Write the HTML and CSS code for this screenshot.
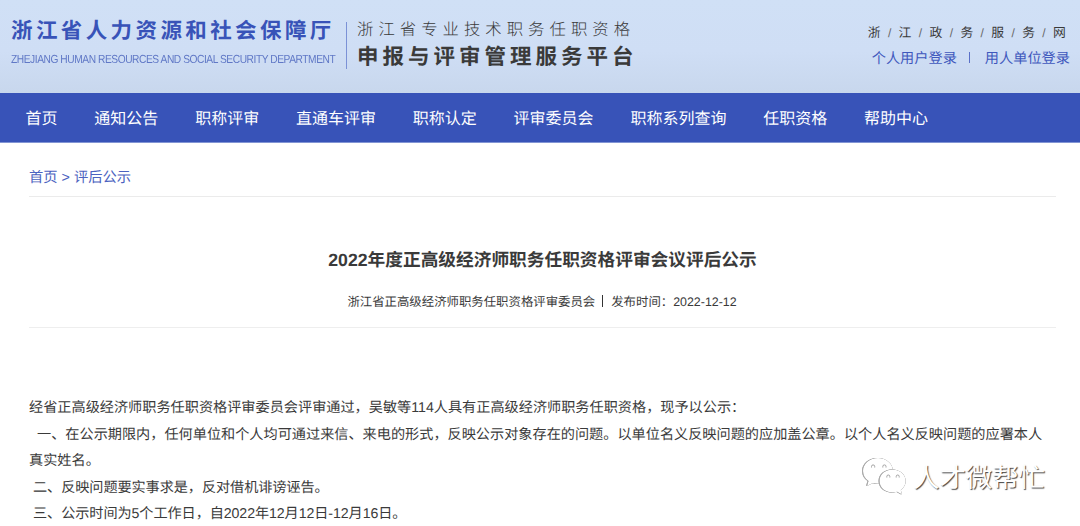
FILE: index.html
```html
<!DOCTYPE html>
<html lang="zh-CN">
<head>
    <meta charset="UTF-8">
    <title>2022年度正高级经济师职务任职资格评审会议评后公示</title>
    <link rel="stylesheet" href="styles.css">
</head>
<body>

<!-- 页头 -->
<header class="header">
    <div class="org">
        <div class="org-name">浙江省人力资源和社会保障厅</div>
        <div class="org-en">ZHEJIANG HUMAN RESOURCES AND SOCIAL SECURITY DEPARTMENT</div>
    </div>
    <div class="platform">
        <div class="platform-sub">浙江省专业技术职务任职资格</div>
        <div class="platform-name">申报与评审管理服务平台</div>
    </div>
    <div class="header-right">
        <a class="gov-link"><span>浙</span><i>/</i><span>江</span><i>/</i><span>政</span><i>/</i><span>务</span><i>/</i><span>服</span><i>/</i><span>务</span><i>/</i><span>网</span></a>
        <div class="login">
            <a>个人用户登录</a>
            <span class="login-line"></span>
            <a>用人单位登录</a>
        </div>
    </div>
</header>

<!-- 导航 -->
<nav class="nav">
    <a>首页</a>
    <a>通知公告</a>
    <a>职称评审</a>
    <a>直通车评审</a>
    <a>职称认定</a>
    <a>评审委员会</a>
    <a>职称系列查询</a>
    <a>任职资格</a>
    <a>帮助中心</a>
</nav>

<!-- 正文 -->
<main class="main">
    <div class="breadcrumb"><a>首页</a><span>&gt;</span><a>评后公示</a></div>
    <h1 class="title">2022年度正高级经济师职务任职资格评审会议评后公示</h1>
    <div class="meta">
        <span>浙江省正高级经济师职务任职资格评审委员会</span>
        <span class="meta-line"></span>
        <span>发布时间：2022-12-12</span>
    </div>
    <div class="content">
        <p>经省正高级经济师职务任职资格评审委员会评审通过，吴敏等114人具有正高级经济师职务任职资格，现予以公示：</p>
        <p class="first">一、在公示期限内，任何单位和个人均可通过来信、来电的形式，反映公示对象存在的问题。以单位名义反映问题的应加盖公章。以个人名义反映问题的应署本人</p>
        <p>真实姓名。</p>
        <p class="item">二、反映问题要实事求是，反对借机诽谤诬告。</p>
        <p class="item">三、公示时间为5个工作日，自2022年12月12日-12月16日。</p>
    </div>
</main>

<!-- 水印 -->
<div class="watermark">
    <svg class="wechat" width="46" height="40" viewBox="0 0 46 40">
        <g class="bubble">
            <path d="M16 1C7.500 1 1 6.800 1 14c0 4.200 2 7.600 5.500 10L5 29l6-3c1.600.5 3.300.8 5 .8C24.500 26.800 31 21 31 14S24.500 1 16 1z"/>
        </g>
        <g class="bubble">
            <path d="M30.500 12.500C23 12.500 17.500 17.600 17.500 24s5.500 11.500 13 11.500c1.600 0 3.200-.3 4.600-.7L40 37.500l-1.200-4.500c3-2.200 4.900-5.300 4.900-9 0-6.400-5.700-11.500-13.200-11.500z"/>
        </g>
        <g class="eyes">
            <path d="M9.500 10.500v-1a1.600 1.600 0 0 1 3.200 0v1M20.800 10.500v-1a1.600 1.600 0 0 1 3.200 0v1M24.800 20.500v-1a1.500 1.500 0 0 1 3 0v1M34.200 20.500v-1a1.500 1.500 0 0 1 3 0v1"/>
        </g>
    </svg>
    <span class="watermark-text">人才微帮忙</span>
</div>

</body>
</html>
```

FILE: styles.css
```css
* {
    box-sizing: border-box;
}

body {
    margin: 0;
    height: 526px;
    overflow: hidden;
    background: #fff;
    color: #3a3a3a;
    font-family: "Liberation Sans", "Noto Sans CJK SC", sans-serif;
    text-rendering: geometricPrecision;
}

/* 页头 */
.header {
    display: flex;
    height: 93px;
    padding-left: 11px;
    padding-right: 10px;
    background: linear-gradient(#d0e0f6 0%, #cfdef5 55%, #c8d7ed 100%);
    white-space: nowrap;
}

.org {
    width: 335px;
    padding-top: 16px;
    color: #3853b8;
}

.org-name {
    height: 30px;
    line-height: 30px;
    font-size: 21.500px;
    font-weight: bold;
    letter-spacing: 3.400px;
}

.org-en {
    height: 26px;
    line-height: 28px;
    font-size: 11.700px;
    letter-spacing: -0.500px;
    color: #6078c6;
    transform: scaleX(0.873);
    transform-origin: left;
}

.platform {
    height: 47px;
    margin-top: 22px;
    padding-left: 10px;
    border-left: 1px solid #7b91d6;
}

.platform-sub {
    height: 16px;
    line-height: 17px;
    font-size: 16.400px;
    font-weight: 300;
    letter-spacing: 5px;
}

.platform-name {
    height: 36px;
    line-height: 38px;
    font-size: 21.500px;
    font-weight: bold;
    letter-spacing: 4px;
}

.header-right {
    margin-left: auto;
    padding-top: 22px;
}

.gov-link {
    display: flex;
    justify-content: space-between;
    height: 22px;
    line-height: 22px;
    padding-right: 4px;
    margin-left: -4px;
    font-size: 12.800px;
}

.gov-link i {
    font-size: 12px;
    font-style: normal;
    color: #666;
}

.login {
    display: flex;
    align-items: center;
    height: 27px;
    font-size: 14.200px;
    color: #3f58bd;
}

.login-line {
    width: 1px;
    height: 11px;
    margin: 0 15px 0 12px;
    background: #5a70c8;
}

/* 导航 */
.nav {
    display: flex;
    gap: 36.800px;
    height: 50px;
    padding-left: 25.500px;
    line-height: 53px;
    background: #3853b8;
    border-bottom: 1px solid #8295d4;
    color: #fff;
    font-size: 16px;
    white-space: nowrap;
}

.main {
    padding: 0 24px 0 29px;
}

.breadcrumb {
    display: flex;
    gap: 4px;
    height: 54px;
    padding-top: 21px;
    line-height: 29px;
    border-bottom: 1px solid #ebebeb;
    font-size: 14.300px;
    color: #4b62c0;
}

.title {
    margin: 0;
    padding-top: 48px;
    line-height: 30px;
    font-size: 17.700px;
    font-weight: bold;
    text-align: center;
}

.meta {
    display: flex;
    justify-content: center;
    align-items: center;
    height: 53px;
    padding-right: 1px;
    border-bottom: 1px solid #eee;
    font-size: 12.400px;
    white-space: nowrap;
}

.meta-line {
    width: 1px;
    height: 12px;
    margin: 0 8px 0 7px;
    background: #333;
}

/* 公示内容 */
.content {
    padding-top: 67.300px;
    line-height: 26.500px;
    font-size: 14.170px;
    white-space: nowrap;
}

.content p {
    margin: 0;
}

.content .first {
    text-indent: 8px;
}

.content .item {
    text-indent: 4px;
    letter-spacing: -0.080px;
}

/* 水印 */
.watermark {
    position: absolute;
    left: 862px;
    top: 457px;
    display: flex;
    align-items: center;
}

.bubble {
    fill: #fff;
    filter: drop-shadow(0.500px 0.800px 0.500px #555) drop-shadow(-0.300px 0 0.300px #aaa);
}

.eyes {
    fill: none;
    stroke: #999;
    stroke-width: 0.900;
}

.watermark-text {
    margin-left: 5px;
    padding-top: 2px;
    line-height: 26px;
    font-size: 26.400px;
    color: #fff;
    text-shadow: 1px 1px 1px #444;
    white-space: nowrap;
}
```
